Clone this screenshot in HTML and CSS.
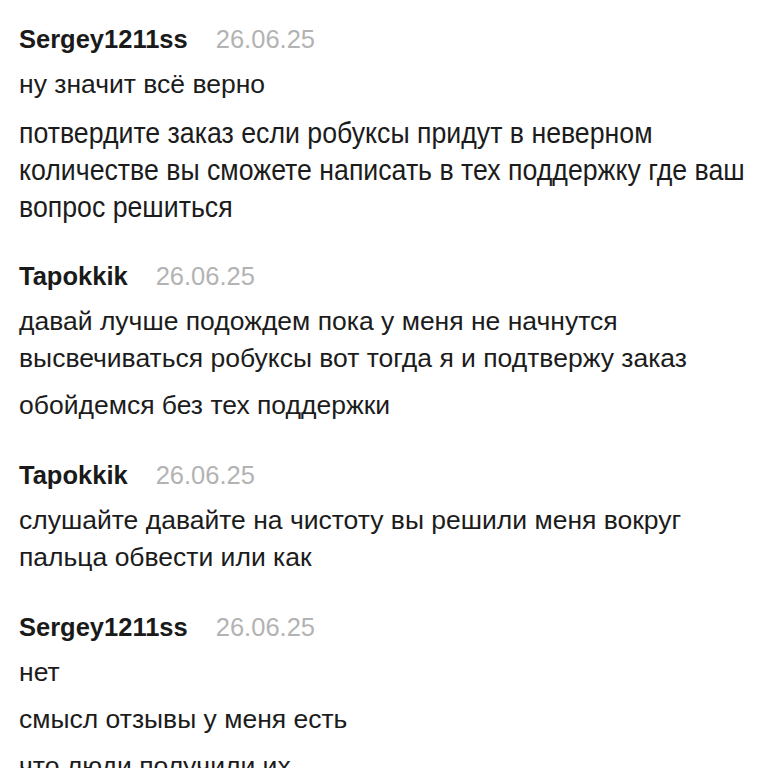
FILE: index.html
```html
<!DOCTYPE html>
<html lang="ru">
<head>
<meta charset="utf-8">
<link rel="stylesheet" href="styles.css">
</head>
<body>
<div class="chat">
  <section class="group">
    <div class="head"><span class="name">Sergey1211ss</span><span class="date">26.06.25</span></div>
    <p class="msg">ну значит всё верно</p>
    <p class="msg condensed">потвердите заказ если робуксы придут в неверном<br>количестве вы сможете написать в тех поддержку где ваш<br>вопрос решиться</p>
  </section>
  <section class="group">
    <div class="head"><span class="name">Tapokkik</span><span class="date">26.06.25</span></div>
    <p class="msg">давай лучше подождем пока у меня не начнутся<br>высвечиваться робуксы вот тогда я и подтвержу заказ</p>
    <p class="msg">обойдемся без тех поддержки</p>
  </section>
  <section class="group">
    <div class="head"><span class="name">Tapokkik</span><span class="date">26.06.25</span></div>
    <p class="msg">слушайте давайте на чистоту вы решили меня вокруг<br>пальца обвести или как</p>
  </section>
  <section class="group">
    <div class="head"><span class="name">Sergey1211ss</span><span class="date">26.06.25</span></div>
    <p class="msg">нет</p>
    <p class="msg">смысл отзывы у меня есть</p>
    <p class="msg">что люди получили их</p>
  </section>
</div>
</body>
</html>
```
FILE: styles.css
```css
html, body {
  margin: 0;
  padding: 0;
  background: #ffffff;
}
body {
  width: 768px;
  height: 768px;
  overflow: hidden;
  font-family: "Liberation Sans", Arial, sans-serif;
  color: #1c1c1c;
}
.chat {
  padding: 21px 0 0 19px;
  display: flex;
  flex-direction: column;
  gap: 33px;
}
.group {
  display: flex;
  flex-direction: column;
  gap: 10px;
}
.head {
  display: flex;
  align-items: baseline;
  gap: 28px;
  height: 37px;
  line-height: 37px;
  margin-bottom: -2px;
}
.name {
  font-weight: bold;
  font-size: 25.5px;
  color: #1a1a1a;
}
.date {
  font-size: 25.5px;
  color: #b3b3b3;
}
.msg {
  margin: 0;
  font-size: 26.5px;
  line-height: 37px;
  white-space: nowrap;
}
.condensed {
  margin-top: 1px;
  font-size: 30px;
  transform: scaleX(0.89);
  transform-origin: left center;
}
```
